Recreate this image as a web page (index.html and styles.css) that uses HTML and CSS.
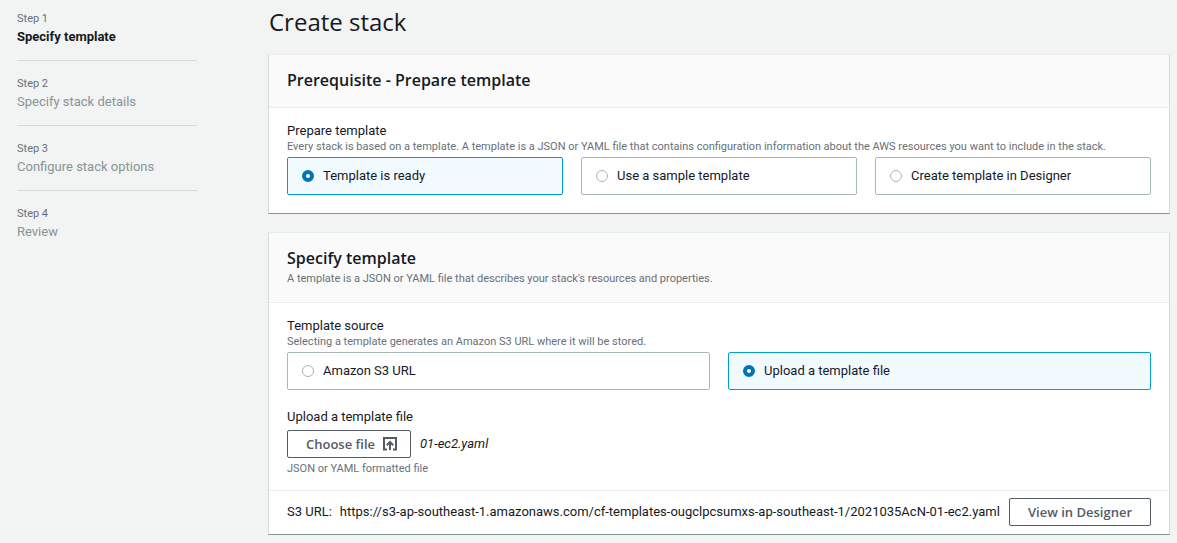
FILE: index.html
```html
<!DOCTYPE html>
<html lang="en">
<head>
<meta charset="utf-8">
<title>Create stack</title>
<link rel="stylesheet" href="styles.css">
</head>
<body>
<div class="layout">
  <nav class="steps" aria-label="Steps">
    <ol class="step-list">
      <li class="step"><span class="step-number">Step 1</span><span class="step-name current" aria-current="step">Specify template</span></li>
      <li class="step"><span class="step-number">Step 2</span><span class="step-name">Specify stack details</span></li>
      <li class="step"><span class="step-number">Step 3</span><span class="step-name">Configure stack options</span></li>
      <li class="step"><span class="step-number">Step 4</span><span class="step-name">Review</span></li>
    </ol>
  </nav>
  <main class="content">
    <h1 class="page-title">Create stack</h1>
    <section class="card">
      <header class="card-header"><h2 class="card-title">Prerequisite - Prepare template</h2></header>
      <div class="card-body">
        <fieldset class="field">
          <legend class="field-label">Prepare template</legend>
          <p class="hint">Every stack is based on a template. A template is a JSON or YAML file that contains configuration information about the AWS resources you want to include in the stack.</p>
          <div class="tiles">
            <label class="tile"><input class="radio" type="radio" name="prepare" checked>Template is ready</label>
            <label class="tile"><input class="radio" type="radio" name="prepare">Use a sample template</label>
            <label class="tile"><input class="radio" type="radio" name="prepare">Create template in Designer</label>
          </div>
        </fieldset>
      </div>
    </section>
    <section class="card">
      <header class="card-header">
        <h2 class="card-title">Specify template</h2>
        <p class="hint">A template is a JSON or YAML file that describes your stack's resources and properties.</p>
      </header>
      <div class="card-body compact">
        <fieldset class="field">
          <legend class="field-label">Template source</legend>
          <p class="hint">Selecting a template generates an Amazon S3 URL where it will be stored.</p>
          <div class="tiles">
            <label class="tile"><input class="radio" type="radio" name="source">Amazon S3 URL</label>
            <label class="tile"><input class="radio" type="radio" name="source" checked>Upload a template file</label>
          </div>
        </fieldset>
        <div class="upload">
          <div class="field-label" id="upload-label">Upload a template file</div>
          <div class="file-row">
            <button class="button" type="button" aria-describedby="upload-label">Choose file
              <svg class="upload-icon" viewBox="0 0 14 14" aria-hidden="true"><path d="M4 12.500H1V1h12v11.500H10M7 13V5M3.800 8.200 7 5l3.200 3.200"/></svg>
            </button>
            <span class="file-name">01-ec2.yaml</span>
          </div>
          <p class="hint">JSON or YAML formatted file</p>
        </div>
      </div>
      <footer class="card-footer">
        <span class="url-label">S3 URL:</span>
        <span class="url">https://s3-ap-southeast-1.amazonaws.com/cf-templates-ougclpcsumxs-ap-southeast-1/2021035AcN-01-ec2.yaml</span>
        <button class="button view" type="button">View in Designer</button>
      </footer>
    </section>
  </main>
</div>
</body>
</html>
```
FILE: styles.css
```css
* { box-sizing: border-box; }
body {
  margin: 0;
  background: #f2f3f3;
  color: #16191f;
  font: 13px/18px Roboto, sans-serif;
}
.layout { display: flex; gap: 71px; padding: 9px 7px 0 17px; }
.steps { flex: 0 0 180px; }
.step-list { margin: 0; padding: 0; list-style: none; }
.step { padding: 14px 0; border-bottom: 1px solid #d5dbdb; }
.step:first-child { padding-top: 1px; }
.step:last-child { border-bottom: 0; }
.step-number, .step-name { display: block; }
.step-number { color: #687078; font-size: 11px; }
.step-name { color: #879596; }
.step-name.current { color: #16191f; font-weight: 700; }
.content { flex: 1; min-width: 0; }
.page-title { margin: 0 0 19px 1px; font-family: "Open Sans", sans-serif; font-size: 24px; line-height: 26px; font-weight: 400; }
.card {
  margin-bottom: 18px;
  background: #fff;
  border: 1px solid #d5dbdb;
  border-top-color: #eaeded;
  border-bottom-color: #879596;
}
.card-header {
  display: flex;
  flex-direction: column;
  gap: 1px;
  padding: 13px 18px 15px;
  background: #fafafa;
  border-bottom: 1px solid #eaeded;
}
.card-title { margin: 0; font-family: "Open Sans", sans-serif; font-size: 16px; line-height: 24px; font-weight: 600; }
.card-body { padding: 14px 18px 18px; }
.card-body.compact { padding-bottom: 14px; }
.field { margin: 0; padding: 0; border: 0; min-width: 0; }
.field-label { padding: 0; }
.hint { margin: 0; color: #687078; font-size: 11px; line-height: 14px; }
.card-header .hint { line-height: 16px; }
.tiles { display: flex; gap: 18px; padding-top: 3px; }
.tile {
  flex: 1;
  display: flex;
  align-items: center;
  gap: 9px;
  min-height: 38px;
  padding: 0 14px;
  border: 1px solid #aab7b8;
  border-radius: 2px;
}
.tile:has(:checked) { background: #f1faff; border-color: #00a1c9; }
.radio {
  appearance: none;
  width: 12px;
  height: 12px;
  margin: 0;
  border: 1px solid #aab7b8;
  border-radius: 50%;
  background: #fff;
}
.radio:checked { border: 4px solid #0073bb; }
.upload { padding-top: 18px; }
.file-row { display: flex; align-items: center; gap: 9px; padding: 4px 0; }
.button {
  display: inline-flex;
  align-items: center;
  justify-content: center;
  gap: 8px;
  height: 28px;
  padding: 0 13px 0 18px;
  border: 1px solid #545b64;
  border-radius: 2px;
  background: #fff;
  color: #545b64;
  font: 600 13px/18px "Open Sans", sans-serif;
  white-space: nowrap;
}
.upload-icon { width: 14px; height: 14px; fill: none; stroke: currentColor; stroke-width: 2; }
.file-name { font-style: italic; }
.card-footer { display: flex; align-items: center; padding: 7px 18px 8px; border-top: 1px solid #eaeded; }
.url-label { margin-right: 8px; white-space: nowrap; }
.url { min-width: 0; overflow-wrap: anywhere; }
.view { margin-left: auto; padding: 0 18px; }
```
